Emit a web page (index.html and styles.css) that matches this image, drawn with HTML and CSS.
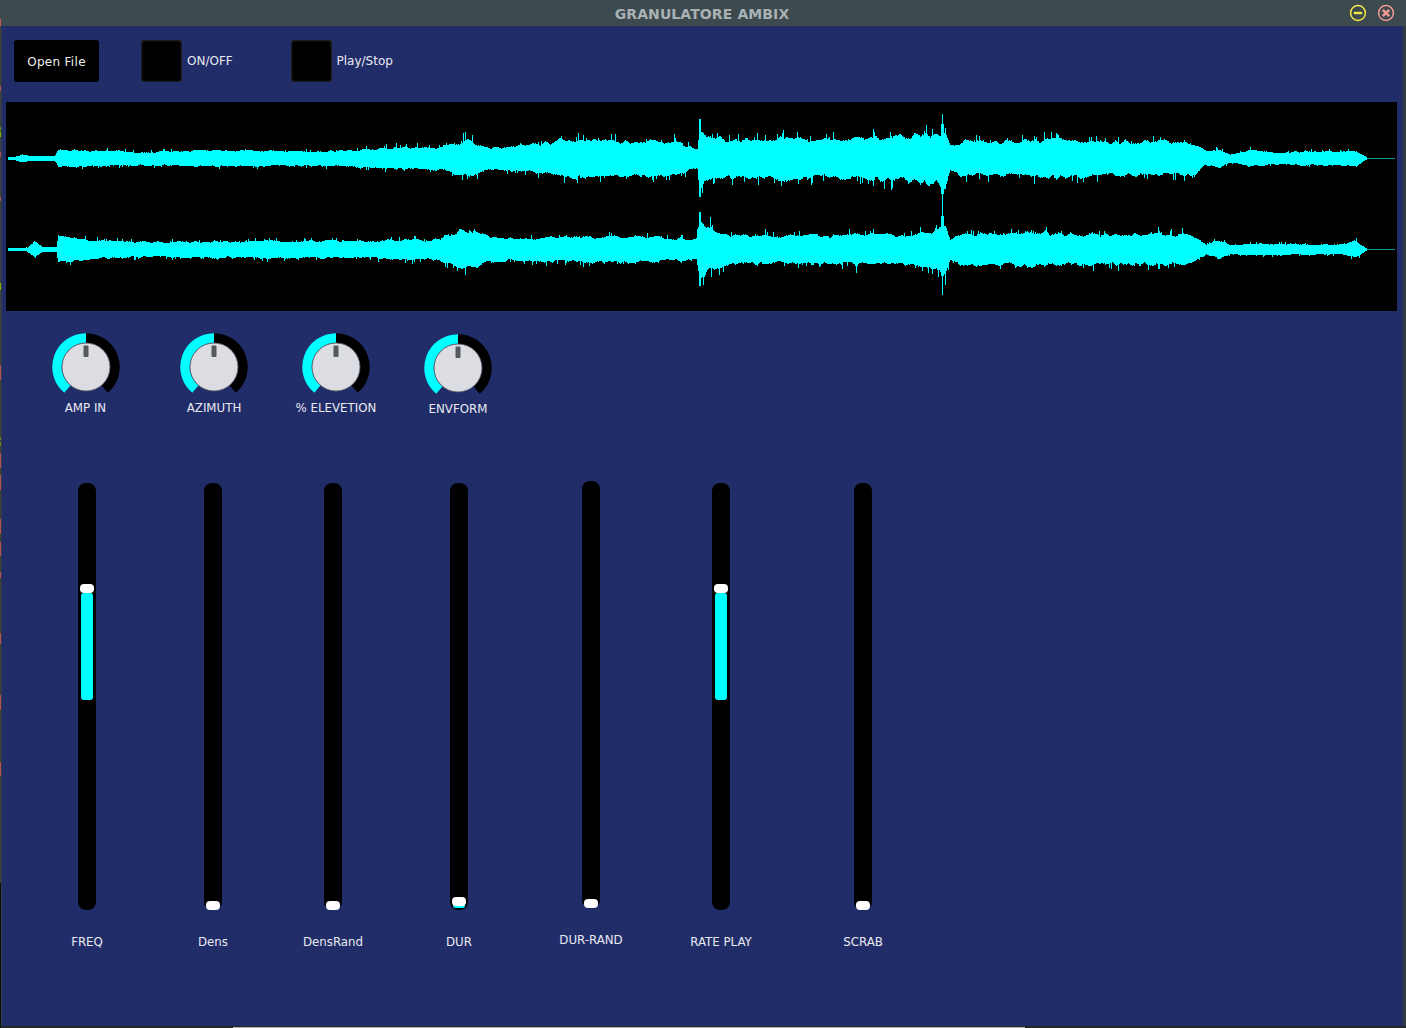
FILE: index.html
```html
<!DOCTYPE html>
<html lang="en">
<head>
  <meta charset="UTF-8">
  <title>Granulatore Ambix</title>
  <link rel="stylesheet" href="styles.css">
</head>
<body>

  <svg class="defs" width="0" height="0">
    <symbol id="knob" viewBox="-34 -34 68 68">
      <path d="M -18.64 22.2 A 29 29 0 0 1 0 -29" fill="none" stroke="#00ffff" stroke-width="9.5"/>
      <path d="M 0 -29 A 29 29 0 0 1 18.64 22.2" fill="none" stroke="#000000" stroke-width="9.5"/>
      <circle r="24" fill="#dcdde2" stroke="#55585f" stroke-width="0.8"/>
      <rect x="-2.5" y="-21.5" width="5" height="11.5" rx="1" fill="#55585c"/>
    </symbol>
  </svg>

  <div class="edge"></div>

  <div class="window">
    <!-- Title bar -->
    <header class="titlebar">
      <span class="title">GRANULATORE AMBIX</span>
      <div class="win-buttons">
        <svg class="win-btn" viewBox="0 0 18 18">
          <circle cx="9" cy="9" r="7.4" fill="none" stroke="#f4e748" stroke-width="1.5"/>
          <rect x="4.8" y="7.8" width="8.4" height="2.4" fill="#f4e748"/>
        </svg>
        <svg class="win-btn" viewBox="0 0 18 18">
          <circle cx="9" cy="9" r="7.4" fill="none" stroke="#f2998f" stroke-width="1.5"/>
          <path d="M5.8 5.8 L12.2 12.2 M12.2 5.8 L5.8 12.2" stroke="#f2998f" stroke-width="2.6"/>
        </svg>
      </div>
    </header>

    <main class="panel">
      <!-- Top buttons -->
      <div class="toolbar">
        <button class="open-btn">Open File</button>
        <div class="toggle">
          <span class="toggle-box"></span>
          <span class="toggle-label">ON/OFF</span>
        </div>
        <div class="toggle">
          <span class="toggle-box"></span>
          <span class="toggle-label">Play/Stop</span>
        </div>
      </div>

      <canvas id="waveform" class="waveform" width="1391" height="209"></canvas>

      <!-- Knobs -->
      <div class="knobs">
        <div class="knob knob-amp">
          <svg class="knob-dial"><use href="#knob"/></svg>
          <span class="knob-label">AMP IN</span>
        </div>
        <div class="knob knob-azi">
          <svg class="knob-dial"><use href="#knob"/></svg>
          <span class="knob-label">AZIMUTH</span>
        </div>
        <div class="knob knob-ele">
          <svg class="knob-dial"><use href="#knob"/></svg>
          <span class="knob-label">% ELEVETION</span>
        </div>
        <div class="knob knob-env">
          <svg class="knob-dial"><use href="#knob"/></svg>
          <span class="knob-label">ENVFORM</span>
        </div>
      </div>

      <!-- Sliders -->
      <div class="sliders">
        <div class="slider s-freq">
          <div class="track">
            <div class="fill" style="top: 110px; height: 107px;"></div>
            <div class="handle" style="top: 101px;"></div>
          </div>
          <span class="slider-label">FREQ</span>
        </div>
        <div class="slider s-dens">
          <div class="track"><div class="handle" style="top: 418px;"></div></div>
          <span class="slider-label">Dens</span>
        </div>
        <div class="slider s-rand">
          <div class="track"><div class="handle" style="top: 418px;"></div></div>
          <span class="slider-label">DensRand</span>
        </div>
        <div class="slider s-dur">
          <div class="track">
            <div class="fill" style="top: 420px; height: 5px;"></div>
            <div class="handle" style="top: 414px;"></div>
          </div>
          <span class="slider-label">DUR</span>
        </div>
        <div class="slider s-durrand">
          <div class="track"><div class="handle" style="top: 418px;"></div></div>
          <span class="slider-label">DUR-RAND</span>
        </div>
        <div class="slider s-rate">
          <div class="track">
            <div class="fill" style="top: 110px; height: 107px;"></div>
            <div class="handle" style="top: 101px;"></div>
          </div>
          <span class="slider-label">RATE PLAY</span>
        </div>
        <div class="slider s-scrab">
          <div class="track"><div class="handle" style="top: 418px;"></div></div>
          <span class="slider-label">SCRAB</span>
        </div>
      </div>
    </main>

    <div class="bottom-edge"><span class="bottom-light"></span></div>
  </div>

  <script src="waveform.js"></script>
</body>
</html>
```

FILE: styles.css
```css
* {
  box-sizing: border-box;
}

html, body {
  margin: 0;
  height: 100%;
}

body {
  display: flex;
  width: 1406px;
  height: 1028px;
  overflow: hidden;
  background-color: #333b40;
  font-family: "DejaVu Sans", sans-serif;
  font-size: 12px;
  color: #e8e9f0;
}

.defs {
  position: absolute;
}

/* the window behind peeks out on the left */
.edge {
  flex: 0 0 1px;
  background: linear-gradient(to bottom,
    #3c494e 0 19px, #c9555a 19px 26px, #3a4046 26px 86px, #a8505a 86px 91px,
    #3a4046 91px 127px, #5a8a20 127px 131px, #3a4046 131px 132px, #74b800 132px 137px,
    #3a4046 137px 152px, #a8505a 152px 157px, #3a4046 157px 197px, #a8505a 197px 201px,
    #3a4046 201px 283px, #74b800 283px 290px, #3a4046 290px 365px, #b8505a 365px 380px,
    #3a4046 380px 437px, #5a8a20 437px 440px, #3a4046 440px 442px, #5a8a20 442px 446px,
    #3a4046 446px 453px, #b8505a 453px 468px, #3a4046 468px 475px, #b8505a 475px 490px,
    #3a4046 490px 519px, #b8505a 519px 534px, #3a4046 534px 542px, #b8505a 542px 556px,
    #3a4046 556px 572px, #b8505a 572px 578px, #3a4046 578px 633px, #b8505a 633px 644px,
    #3a4046 644px 695px, #b8505a 695px 710px, #3a4046 710px 762px, #b8505a 762px 776px,
    #3a4046 776px 883px, #0c0e10 883px 1028px);
}

.window {
  flex: 1;
  display: flex;
  flex-direction: column;
  min-width: 0;
}

.titlebar {
  position: relative;
  flex: 0 0 26px;
  display: flex;
  align-items: center;
  justify-content: center;
  padding-right: 3px;
  background-color: #3c494e;
}

.title {
  margin-top: 1px;
  font-size: 14px;
  font-weight: 700;
  letter-spacing: 0.1px;
  color: #a9b1b4;
}

.win-buttons {
  position: absolute;
  top: 4px;
  right: 11px;
  display: flex;
  gap: 10px;
}

.win-btn {
  width: 18px;
  height: 18px;
}

.panel {
  flex: 1;
  margin-left: 1px;
  margin-right: 3px;
  background-color: #212d69;
}

.toolbar {
  display: flex;
  align-items: center;
  height: 42px;
  margin-top: 14px;
  padding-left: 12px;
}

.open-btn {
  width: 85px;
  height: 42px;
  padding: 2px 0 0;
  margin-right: 42px;
  border: none;
  border-radius: 3px;
  background-color: #000;
  color: #eee;
  font-family: inherit;
  font-size: 12px;
  letter-spacing: 0.3px;
}

.toggle {
  display: flex;
  align-items: center;
  width: 149.5px;
}

.toggle-box {
  width: 41px;
  height: 42px;
  border-radius: 3px;
  background-color: #000;
  box-shadow: inset 0 0 3px #4a4a4a;
}

.toggle-label {
  margin-left: 5px;
}

.waveform {
  display: block;
  margin-top: 20px;
  margin-left: 4px;
  background-color: #000;
}

.knobs {
  display: flex;
  margin-top: 22px;
}

.knob {
  display: flex;
  flex-direction: column;
  align-items: center;
  width: 120px;
}

.knob-dial {
  width: 68px;
  height: 68px;
}

.knob-label {
  font-size: 11.8px;
  line-height: 14px;
}

.knob-amp { margin-left: 23.5px; }
.knob-azi { margin-left: 8.5px; }
.knob-ele { margin-left: 2px; }
.knob-env { margin-left: 2px; margin-top: 1px; }

.sliders {
  display: flex;
  margin-top: 67px;
}

.slider {
  display: flex;
  flex-direction: column;
  align-items: center;
  width: 100px;
}

.track {
  position: relative;
  width: 18px;
  height: 427px;
  border-radius: 8px;
  background-color: #000;
}

.fill {
  position: absolute;
  left: 3px;
  width: 12px;
  border-radius: 3px;
  background-color: #00ffff;
}

.handle {
  position: absolute;
  left: 2px;
  width: 14px;
  height: 9px;
  border-radius: 4px;
  background-color: #fff;
}

.slider-label {
  margin-top: 25px;
  font-size: 11.8px;
  line-height: 14px;
}

.s-freq { margin-left: 35px; }
.s-dens { margin-left: 26px; }
.s-rand { margin-left: 20px; }
.s-dur { margin-left: 26px; }
.s-durrand { margin-left: 32px; margin-top: -2px; }
.s-rate { margin-left: 30px; }
.s-scrab { margin-left: 42px; }

.bottom-edge {
  position: relative;
  flex: 0 0 2px;
  background-color: #24282a;
}

.bottom-light {
  position: absolute;
  left: 232px;
  bottom: 0;
  width: 792px;
  height: 1px;
  background-color: #b4b4b4;
}
```

FILE: waveform.js
```js
const canvas = document.getElementById('waveform');
const ctx = canvas.getContext('2d');

// x in page pixels, amplitude in pixels
const channelA = [
  [8, 1], [16, 1.5], [22, 3.2], [30, 1.8], [54, 1.8], [58, 8], [100, 7], [150, 6.5], [200, 7],
  [300, 6.5], [350, 7.5], [400, 10], [440, 11], [465, 18], [490, 11], [530, 12], [560, 18],
  [620, 16], [680, 16], [690, 10], [697, 10], [699, 30], [708, 22], [725, 18], [800, 19],
  [900, 20], [935, 23], [945, 25], [950, 10], [962, 16], [1050, 18], [1100, 16], [1190, 16],
  [1206, 6], [1218, 9], [1230, 4], [1250, 7], [1280, 5], [1300, 6], [1340, 6], [1356, 7],
  [1365, 1.5], [1369, 0.4], [1395, 0.4]
];

const channelB = [
  [8, 1], [27, 1.5], [34, 8], [42, 2], [56, 2], [58, 11], [100, 8.5], [150, 7], [250, 7.5],
  [300, 8.5], [380, 7.5], [400, 10], [430, 8], [465, 18], [490, 11], [540, 10.5], [600, 11.5],
  [680, 11], [696, 11], [699, 30], [708, 22], [725, 15], [740, 14], [900, 14], [935, 17],
  [945, 23], [950, 9], [962, 15], [1050, 15], [1100, 14], [1190, 15], [1206, 4], [1218, 9],
  [1230, 4], [1250, 5], [1280, 5], [1340, 4], [1356, 8], [1365, 1.5], [1369, 0.4], [1395, 0.4]
];

// small repeatable random generator, so the picture is the same on every load
let seed = 4711;
function rand() {
  seed = (seed * 16807) % 2147483647;
  return seed / 2147483647;
}

function envelope(points, x) {
  for (let i = 1; i < points.length; i++) {
    if (x <= points[i][0]) {
      const [x0, a0] = points[i - 1];
      const [x1, a1] = points[i];
      return a0 + (a1 - a0) * (x - x0) / (x1 - x0);
    }
  }
  return 0;
}

// slow wobble: random values every `step` pixels, blended between
function makeBumps(step, low, high) {
  const values = [];
  for (let i = 0; i <= 1400 / step + 1; i++) values.push(low + rand() * (high - low));
  return x => {
    const pos = x / step;
    const i = Math.floor(pos);
    return values[i] + (values[i + 1] - values[i]) * (pos - i);
  };
}

function drawChannel(points, center) {
  const slow = makeBumps(19, 0.92, 1.08);
  const upBumps = makeBumps(5, 0.85, 1.15);
  const downBumps = makeBumps(4, 0.85, 1.15);

  function peak(amp, bumps, x) {
    let value = amp * slow(x) * bumps(x) * (0.96 + rand() * 0.08);
    if (amp > 4 && rand() < 0.1) value += rand() * amp * 0.45;
    return Math.round(value);
  }

  for (let x = 8; x < 1395; x++) {
    const amp = envelope(points, x);
    const px = x - 6;
    if (amp < 1) {
      ctx.fillStyle = '#0a9696';
      ctx.fillRect(px, center, 1, 1);
      continue;
    }
    const up = peak(amp, upBumps, x);
    const down = peak(amp, downBumps, x);
    ctx.fillStyle = '#00ffff';
    ctx.fillRect(px, center - up, 1, up + down + 1);
  }
}

// y values below are canvas pixels, page y minus 102
drawChannel(channelA, 56);
drawChannel(channelB, 147);

ctx.fillStyle = '#00ffff';
ctx.fillRect(942 - 6, 114 - 102, 1, 295 - 114);
ctx.fillRect(941 - 6, 124 - 102, 3, 70);
ctx.fillRect(941 - 6, 216 - 102, 3, 60);
ctx.fillRect(699 - 6, 119 - 102, 2, 78);
ctx.fillRect(699 - 6, 212 - 102, 2, 74);
```
